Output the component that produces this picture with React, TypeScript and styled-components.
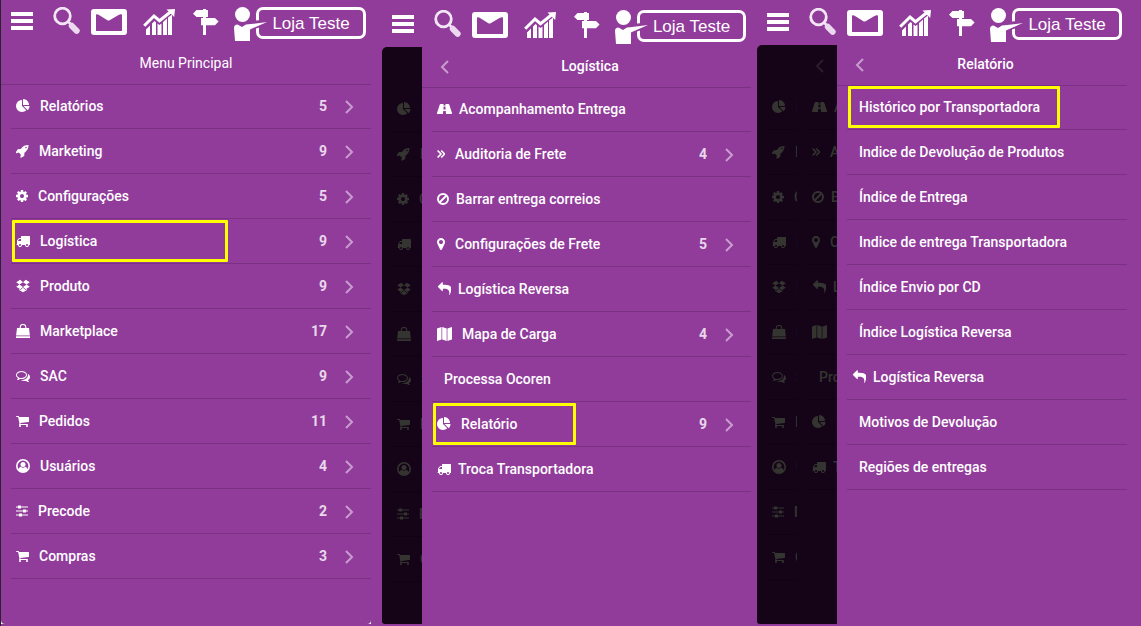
import React from "react";
import styled, { createGlobalStyle } from "styled-components";

const PURPLE = "#913b9b";
const LINE = "#7a3083";
const DARK = "#150417";

const GlobalStyle = createGlobalStyle`
  *, *::before, *::after { box-sizing: border-box; }
  body { margin: 0; background: ${PURPLE}; }
`;

const Page = styled.main`
  display: grid;
  grid-template-columns: 382fr 375fr 384fr;
  min-height: 100vh;
  background: ${PURPLE};
  color: #fff;
  font-family: Roboto, "Liberation Sans", sans-serif;
  font-size: 14px;
  font-weight: 500;
  line-height: 20px;
`;

const Screen = styled.section<{ $gutter: number; $edge?: boolean }>`
  display: flex;
  flex-direction: column;
  min-width: 0;
  padding: 0 ${(p) => p.$gutter}px 2px 0;
  border-left: ${(p) => (p.$edge ? "1px solid #2b2030" : "0")};
`;

const TopBar = styled.header<{ $height: number }>`
  display: flex;
  align-items: flex-end;
  height: ${(p) => p.$height}px;
  padding: 0 5px 3px 10px;
`;

const IconButton = styled.button<{ $after: number }>`
  display: block;
  flex: none;
  margin: 0 ${(p) => p.$after}px 0 0;
  padding: 0;
  border: 0;
  background: none;
  color: inherit;
  cursor: pointer;

  svg { display: block; }
`;

const StoreButton = styled.button`
  display: flex;
  align-items: flex-start;
  flex: 1;
  padding: 0;
  border: 0;
  background: none;
  color: #fff;
  cursor: pointer;

  svg { display: block; flex: none; z-index: 1; }
`;

const StoreName = styled.span`
  flex: 1;
  height: 32px;
  margin-left: -12px;
  border: 3px solid #fff;
  border-radius: 7px;
  font: 400 17px/27px "Liberation Sans", Arial, sans-serif;
  text-align: center;
  white-space: nowrap;
`;

const Stack = styled.div<{ $notched?: boolean }>`
  display: flex;
  flex: 1;
  background: ${(p) => (p.$notched ? "#fff" : PURPLE)};
`;

const Strip = styled.div`
  flex: none;
  width: 40px;
  overflow: hidden;
  background: ${DARK};
  color: #343431;

  &:first-child { border-radius: 5px 0 0 3px; }
`;

const StripHead = styled.div`
  display: flex;
  align-items: center;
  height: 41px;
  padding-left: 18px;
  color: #2a1e2a;
`;

const Menu = styled.nav<{ $round: string }>`
  flex: 1;
  min-width: 0;
  background: ${PURPLE};
  border-radius: ${(p) => p.$round};
`;

const TitleBar = styled.div<{ $root?: boolean }>`
  display: grid;
  grid-template-columns: ${(p) => (p.$root ? "40px 1fr 40px" : "47px 1fr 40px")};
  align-items: center;
  height: 41px;
  padding-bottom: 2px;
  border-bottom: 1px solid ${LINE};
`;

const Title = styled.h2<{ $root?: boolean }>`
  grid-column: 2;
  margin: 0;
  font-size: 14px;
  font-weight: ${(p) => (p.$root ? 400 : 500)};
  line-height: 20px;
  text-align: center;
`;

const BackButton = styled.button`
  display: block;
  padding: 1px 0 0 18px;
  border: 0;
  background: none;
  color: rgba(255, 255, 255, 0.5);
  cursor: pointer;

  svg { display: block; }
`;

const List = styled.ul`
  margin: -1px 0 0 10px;
  padding: 0;
  list-style: none;
`;

const Item = styled.li<{ $dim?: boolean }>`
  position: relative;
  height: 45px;
  border-bottom: 1px solid ${(p) => (p.$dim ? "#100212" : LINE)};
`;

const RowLink = styled.a<{ $gap: number }>`
  display: flex;
  align-items: center;
  gap: ${(p) => p.$gap}px;
  height: 44px;
  padding: 0 17px 0 5px;
  color: inherit;
  text-decoration: none;
  white-space: nowrap;
`;

const Glyph = styled.span<{ $w: number }>`
  flex: none;
  width: ${(p) => p.$w}px;

  svg { display: block; }
`;

const Label = styled.span`
  flex: 1;
`;

const Count = styled.span`
  margin-right: 8px;
  font-weight: 700;
  opacity: 0.8;
`;

const Next = styled.span`
  padding-top: 2px;
  opacity: 0.5;

  svg { display: block; }
`;

const Highlight = styled.span<{ $w: number }>`
  position: absolute;
  top: 1px;
  left: 1px;
  width: ${(p) => p.$w}px;
  height: 42px;
  border: 3px solid #ffff00;
  border-radius: 1px;
  pointer-events: none;
`;

type IconName =
  | "pie" | "rocket" | "cog" | "truck" | "dropbox" | "bag" | "comments" | "cart"
  | "user" | "sliders" | "road" | "double" | "ban" | "pin" | "reply" | "map" | "none";

const PATHS: Partial<Record<IconName, string>> = {
  pie: "M768 890l546 546q-106 108-247.5 168t-298.5 60q-209 0-385.5-103t-279.5-279.5-103-385.5 103-385.5 279.5-279.5 385.5-103v762zm187 6h773q0 157-60 298.5t-168 247.5zm709-128h-768v-768q209 0 385.5 103t279.5 279.5 103 385.5z",
  rocket: "M1440 448q0-40-28-68t-68-28-68 28-28 68 28 68 68 28 68-28 28-68zm224-288q0 249-75.5 430.5t-253.5 360.5q-81 80-195 176l-20 379q-2 16-16 26l-384 224q-7 4-16 4-12 0-23-9l-64-64q-13-14-8-32l85-276-281-281-276 85q-3 1-9 1-14 0-23-9l-64-64q-17-19-5-39l224-384q10-14 26-16l379-20q96-114 176-195 188-187 358-258t431-71q14 0 24 9.5t10 22.5z",
  cog: "M1152 896q0-106-75-181t-181-75-181 75-75 181 75 181 181 75 181-75 75-181zm512-109v222q0 12-8 23t-20 13l-185 28q-19 54-39 91 35 50 107 138 10 12 10 25t-9 23q-27 37-99 108t-94 71q-12 0-26-9l-138-108q-44 23-91 38-16 136-29 186-7 28-36 28h-222q-14 0-24.5-8.5t-11.5-21.5l-28-184q-49-16-90-37l-141 107q-10 9-25 9-14 0-25-11-126-114-165-168-7-10-7-23 0-12 8-23 15-21 51-66.5t54-70.5q-27-50-41-99l-183-27q-13-2-21-12.5t-8-23.5v-222q0-12 8-23t19-13l186-28q14-46 39-92-40-57-107-138-10-12-10-24 0-10 9-23 26-36 98.5-107.5t94.5-71.5q13 0 26 10l138 107q44-23 91-38 16-136 29-186 7-28 36-28h222q14 0 24.5 8.5t11.5 21.5l28 184q49 16 90 37l142-107q9-9 24-9 13 0 25 10 129 119 165 170 7 8 7 22 0 12-8 23-15 21-51 66.5t-54 70.5q26 50 41 98l183 28q13 2 21 12.5t8 23.5z",
  truck: "M640 1408q0-52-38-90t-90-38-90 38-38 90 38 90 90 38 90-38 38-90zm-384-512h384v-256h-158q-13 0-22 9l-195 195q-9 9-9 22v30zm1280 512q0-52-38-90t-90-38-90 38-38 90 38 90 90 38 90-38 38-90zm256-1088v1024q0 15-4 26.5t-13.5 18.5-16.5 11.5-23.5 6-22.5 2-25.5 0-22.5-.5q0 106-75 181t-181 75-181-75-75-181h-384q0 106-75 181t-181 75-181-75-75-181h-64q-3 0-22.5.5t-25.5 0-22.5-2-23.5-6-16.5-11.5-13.5-18.5-4-26.5q0-26 19-45t45-19v-320q0-8-.5-35t0-38 2.5-34.5 6.5-37 14-30.5 22.5-30l198-198q19-19 50.5-32t58.5-13h160v-192q0-26 19-45t45-19h1024q26 0 45 19t19 45z",
  cart: "M704 1536q0 52-38 90t-90 38-90-38-38-90 38-90 90-38 90 38 38 90zm896 0q0 52-38 90t-90 38-90-38-38-90 38-90 90-38 90 38 38 90zm128-1088v512q0 24-16.5 42.5t-40.5 21.5l-1044 122q13 60 13 70 0 16-24 64h920q26 0 45 19t19 45-19 45-45 19h-1024q-26 0-45-19t-19-45q0-11 8-31.5t16-36 21.5-40 15.5-29.5l-177-823h-204q-26 0-45-19t-19-45 19-45 45-19h256q16 0 28.5 6.5t19.5 15.5 13 24.5 8 26 5.5 29.5 4.5 26h1201q26 0 45 19t19 45z",
  pin: "M1152 640q0-106-75-181t-181-75-181 75-75 181 75 181 181 75 181-75 75-181zm256 0q0 109-33 179l-364 774q-16 33-47.5 52t-67.5 19-67.5-19-46.5-52l-365-774q-33-70-33-179 0-212 150-362t362-150 362 150 150 362z",
  reply: "M1792 1120q0 166-127 451-3 7-10.5 24t-13.5 30-13 22q-12 17-28 17-15 0-23.5-10t-8.5-25q0-9 2.5-26.5t2.5-23.5q5-68 5-123 0-112-19.5-200.5t-54-153.5-89-112-118.5-76.5-149.5-41-178.5-12h-224v256q0 26-19 45t-45 19-45-19l-512-512q-19-19-19-45t19-45l512-512q19-19 45-19t45 19 19 45v256h224q713 0 875 403 53 134 53 333z",
  comments: "M704 384q-153 0-286 52t-211.5 141-78.5 191q0 82 53 158t149 132l97 56-35 84q34-20 62-39l44-31 53 10q78 14 153 14 153 0 286-52t211.5-141 78.5-191-78.5-191-211.5-141-286-52zm0-128q191 0 353.5 68.5t256.5 186.5 94 257-94 257-256.5 186.5-353.5 68.5q-86 0-176-16-124 88-278 128-36 9-86 16h-3q-11 0-20.5-8t-11.5-21q-1-3-1-6.5t.5-6.5 2-6l2.5-5 3.5-5.5 4-5 4.5-5 4-4.5q5-6 23-25t26-29.5 22.5-29 25-38.5 20.5-44q-124-72-195-177t-71-224q0-139 94-257t256.5-186.5 353.5-68.5zm822 1169q10 24 20.5 44t25 38.5 22.5 29 26 29.5 23 25q1 1 4 4.5t4.5 5 4 5 3.5 5.5l2.5 5 2 6 .5 6.5-1 6.5q-3 14-13 22t-22 7q-50-7-86-16-154-40-278-128-90 16-176 16-271 0-472-132 58 4 88 4 161 0 309-45t264-129q125-92 192-212t67-254q0-77-23-152 129 71 204 178t75 230q0 120-71 224.5t-195 176.5z",
};

const WIDTHS: Record<IconName, number> = {
  pie: 14, rocket: 13, cog: 12, truck: 14, dropbox: 14, bag: 14, comments: 14, cart: 13,
  user: 14, sliders: 12, road: 15, double: 8, ban: 12, pin: 8, reply: 14, map: 15, none: 0,
};

function RowIcon({ name }: { name: IconName }) {
  const w = WIDTHS[name];
  const path = PATHS[name];
  const box = { width: w, height: 14, viewBox: `0 0 ${w} 14`, "aria-hidden": true } as const;
  if (path) {
    return (
      <svg width={w} height="14" viewBox={`${(1792 - w * 128) / 2} 0 ${w * 128} 1792`} fill="currentColor" aria-hidden>
        <path d={path} />
      </svg>
    );
  }
  switch (name) {
    case "dropbox":
      return (
        <svg {...box} fill="currentColor">
          <path d="M4.200.8 7 3.200 3.400 5.600.2 3.300zM9.800.8 7 3.200l3.600 2.400 3.200-2.300zM3.400 5.400 7 7.900 4.300 10.300.2 7.700zM10.600 5.400 7 7.900l2.700 2.400 4.100-2.600z" />
          <path d="M3 10l1.400.900L7 8.700l2.600 2.200L11 10v1L7 13.300 3 11z" />
        </svg>
      );
    case "road":
      return (
        <svg {...box} fill="currentColor" fillRule="evenodd">
          <path d="M3.600 2h2.900v1.500h2V2h2.900q.6 0 .8.600L15 11q.3 1-.6 1H9l-.2-3H6.200L6 12H.6Q-.3 12 0 11l2.800-8.400q.2-.6.800-.6zM6.600 4.500 6.400 7.500h2.200l-.2-3z" />
        </svg>
      );
    case "map":
      return (
        <svg {...box} fill="currentColor">
          <path d="M0 1.500 4.500 0v12.500L0 14zM5.200 0l4.500 1.500V14l-4.500-1.500zM10.400 1.500 15 0v12.500L10.400 14z" />
        </svg>
      );
    case "bag":
      return (
        <svg {...box} fill="currentColor">
          <path d="M1 4h12l.9 7.600H.1zM0 12.200h14V14H0z" />
          <path d="M4.200 6V3.200a2.800 2.800 0 0 1 5.600 0V6" fill="none" stroke="currentColor" strokeWidth="1.100" />
        </svg>
      );
    case "user":
      return (
        <svg {...box} fill="currentColor">
          <circle cx="7" cy="7" r="6.200" fill="none" stroke="currentColor" strokeWidth="1.600" />
          <circle cx="7" cy="5.400" r="2.500" />
          <path d="M2.200 11C2.600 9 3.600 8 4.900 7.700a3 3 0 0 0 4.200 0c1.300.3 2.300 1.300 2.700 3.300a6.500 6.500 0 0 1-9.600 0z" />
        </svg>
      );
    case "sliders":
      return (
        <svg {...box} fill="currentColor">
          <path d="M0 2.500h12v1H0zM0 6.500h12v1H0zM0 10.500h12v1H0z" />
          <path d="M2 1.500h3v3H2zM7 5.500h3v3H7zM3 9.500h3v3H3z" />
        </svg>
      );
    case "double":
      return (
        <svg {...box} fill="none" stroke="currentColor" strokeWidth="1.600">
          <path d="M.6 3.500 4 7 .6 10.500M4.200 3.500 7.600 7l-3.400 3.500" />
        </svg>
      );
    case "ban":
      return (
        <svg {...box} fill="none" stroke="currentColor" strokeWidth="2">
          <circle cx="6" cy="7" r="5" />
          <path d="M2.500 10.500l7-7" />
        </svg>
      );
    default:
      return null;
  }
}

function Chevron({ back }: { back?: boolean }) {
  return (
    <svg width="9" height="14" viewBox="0 0 9 14" fill="none" stroke="currentColor" strokeWidth="2" aria-hidden>
      <path d={back ? "M8 1 2 7l6 6" : "M1 1l6 6-6 6"} />
    </svg>
  );
}

type Entry = { icon?: IconName; label: string; count?: number; mark?: number };

const MAIN: Entry[] = [
  { icon: "pie", label: "Relatórios", count: 5 },
  { icon: "rocket", label: "Marketing", count: 9 },
  { icon: "cog", label: "Configurações", count: 5 },
  { icon: "truck", label: "Logística", count: 9, mark: 216 },
  { icon: "dropbox", label: "Produto", count: 9 },
  { icon: "bag", label: "Marketplace", count: 17 },
  { icon: "comments", label: "SAC", count: 9 },
  { icon: "cart", label: "Pedidos", count: 11 },
  { icon: "user", label: "Usuários", count: 4 },
  { icon: "sliders", label: "Precode", count: 2 },
  { icon: "cart", label: "Compras", count: 3 },
];

const LOGISTICS: Entry[] = [
  { icon: "road", label: "Acompanhamento Entrega" },
  { icon: "double", label: "Auditoria de Frete", count: 4 },
  { icon: "ban", label: "Barrar entrega correios" },
  { icon: "pin", label: "Configurações de Frete", count: 5 },
  { icon: "reply", label: "Logística Reversa" },
  { icon: "map", label: "Mapa de Carga", count: 4 },
  { label: "Processa Ocoren" },
  { icon: "pie", label: "Relatório", count: 9, mark: 143 },
  { icon: "truck", label: "Troca Transportadora" },
];

const REPORTS: Entry[] = [
  { label: "Histórico por Transportadora", mark: 212 },
  { label: "Indice de Devolução de Produtos" },
  { label: "Índice de Entrega" },
  { label: "Indice de entrega Transportadora" },
  { label: "Índice Envio por CD" },
  { label: "Índice Logística Reversa" },
  { icon: "reply", label: "Logística Reversa" },
  { label: "Motivos de Devolução" },
  { label: "Regiões de entregas" },
];

function RowContent({ icon = "none", label }: { icon?: IconName; label: string }) {
  return (
    <>
      <Glyph $w={WIDTHS[icon]}><RowIcon name={icon} /></Glyph>
      <Label>{label}</Label>
    </>
  );
}

const gapOf = (entry: Entry) => (entry.count ? 10 : 7);

// Only the start of each label reaches into the 40px that stay uncovered.
const peekOf = (entry: Entry) => entry.label.slice(0, entry.icon ? 1 : 3);

function CoveredMenu({ entries }: { entries: Entry[] }) {
  return (
    <Strip aria-hidden>
      <StripHead>{entries !== MAIN && <Chevron back />}</StripHead>
      <List>
        {entries.map((entry) => (
          <Item key={entry.label} $dim>
            <RowLink as="span" $gap={gapOf(entry)}>
              <RowContent icon={entry.icon} label={peekOf(entry)} />
            </RowLink>
          </Item>
        ))}
      </List>
    </Strip>
  );
}

function OpenMenu({ title, entries, root, round = "0" }: { title: string; entries: Entry[]; root?: boolean; round?: string }) {
  return (
    <Menu $round={round} aria-label={title}>
      <TitleBar $root={root}>
        {!root && <BackButton aria-label="Voltar"><Chevron back /></BackButton>}
        <Title $root={root}>{title}</Title>
      </TitleBar>
      <List>
        {entries.map((entry) => (
          <Item key={entry.label}>
            <RowLink href="#" $gap={gapOf(entry)}>
              <RowContent icon={entry.icon} label={entry.label} />
              {entry.count && <Count>{entry.count}</Count>}
              {entry.count && <Next><Chevron /></Next>}
            </RowLink>
            {entry.mark && <Highlight $w={entry.mark} />}
          </Item>
        ))}
      </List>
    </Menu>
  );
}

function Toolbar({ height }: { height: number }) {
  return (
    <TopBar $height={height}>
      <IconButton $after={20} aria-label="Menu">
        <svg width="22" height="34" viewBox="0 0 22 34" fill="#fff"><path d="M0 5h22v4H0zM0 12h22v4H0zM0 19h22v4H0z" /></svg>
      </IconButton>
      <IconButton $after={11} aria-label="Buscar">
        <svg width="27" height="34" viewBox="0 0 27 34" fill="none">
          <circle cx="9.500" cy="9" r="7.800" stroke="#f3e6f4" strokeWidth="2.800" />
          <path d="M15 14.500l3 3" stroke="#f3e6f4" strokeWidth="2.500" />
          <path d="M18.800 18.800l4.900 5" stroke="#ecd9ef" strokeWidth="6" strokeLinecap="round" />
        </svg>
      </IconButton>
      <IconButton $after={16} aria-label="Mensagens">
        <svg width="36" height="34" viewBox="0 0 36 34">
          <rect y="2" width="36" height="26" rx="3" fill="#fff" />
          <path d="M5 7.500q1.500-.5 3 .5l8 5q1.500 1 3 0L27.500 8q2-1 3.500-.5v16.500H5z" fill={PURPLE} />
        </svg>
      </IconButton>
      <IconButton $after={18} aria-label="Indicadores">
        <svg width="32" height="34" viewBox="0 0 32 34" fill="#fff">
          <path d="M3 22.500l4-4V28H3zM9 16.500l2.500-2.500 1.500 1.200V28H9zM14.500 16.500l2 1.500 2-1.500V28h-4zM20 15l4-3.500V28h-4zM25 10.500l4-3V28h-4z" />
          <path d="M1.200 18.800 11 9l5.500 4.700L28 4.500" fill="none" stroke="#fff" strokeWidth="3" />
          <path d="M23.500 2.500 32 2l-.8 8z" />
        </svg>
      </IconButton>
      <IconButton $after={15} aria-label="Rotas">
        <svg width="26" height="34" viewBox="0 0 26 34" fill="#fff">
          <path d="M10 2h3v26h-3z" />
          <path d="M0 6.800 3.500 3H15v7H3.500zM8 11h14l3.600 3.600L22 18.300H8z" />
        </svg>
      </IconButton>
      <StoreButton>
        <svg width="34" height="34" viewBox="0 0 34 34" fill="#fff" aria-hidden>
          <path d="M22 13.500l12-1v5l-12 4z" fill={PURPLE} />
          <circle cx="8.500" cy="7.500" r="7.500" />
          <path d="M0 21q0-3.500 3.500-3.500L8 20l4-2.500 5-.5 16-2-15.500 6.800-1.500.7V34H1z" />
        </svg>
        <StoreName>Loja Teste</StoreName>
      </StoreButton>
    </TopBar>
  );
}

export default function App() {
  return (
    <>
      <GlobalStyle />
      <Page>
        <Screen $gutter={11} $edge>
          <Toolbar height={44} />
          <Stack $notched>
            <OpenMenu title="Menu Principal" entries={MAIN} root round="0 0 4px 4px" />
          </Stack>
        </Screen>
        <Screen $gutter={6}>
          <Toolbar height={47} />
          <Stack>
            <CoveredMenu entries={MAIN} />
            <OpenMenu title="Logística" entries={LOGISTICS} />
          </Stack>
        </Screen>
        <Screen $gutter={14}>
          <Toolbar height={45} />
          <Stack>
            <CoveredMenu entries={MAIN} />
            <CoveredMenu entries={LOGISTICS} />
            <OpenMenu title="Relatório" entries={REPORTS} />
          </Stack>
        </Screen>
      </Page>
    </>
  );
}
